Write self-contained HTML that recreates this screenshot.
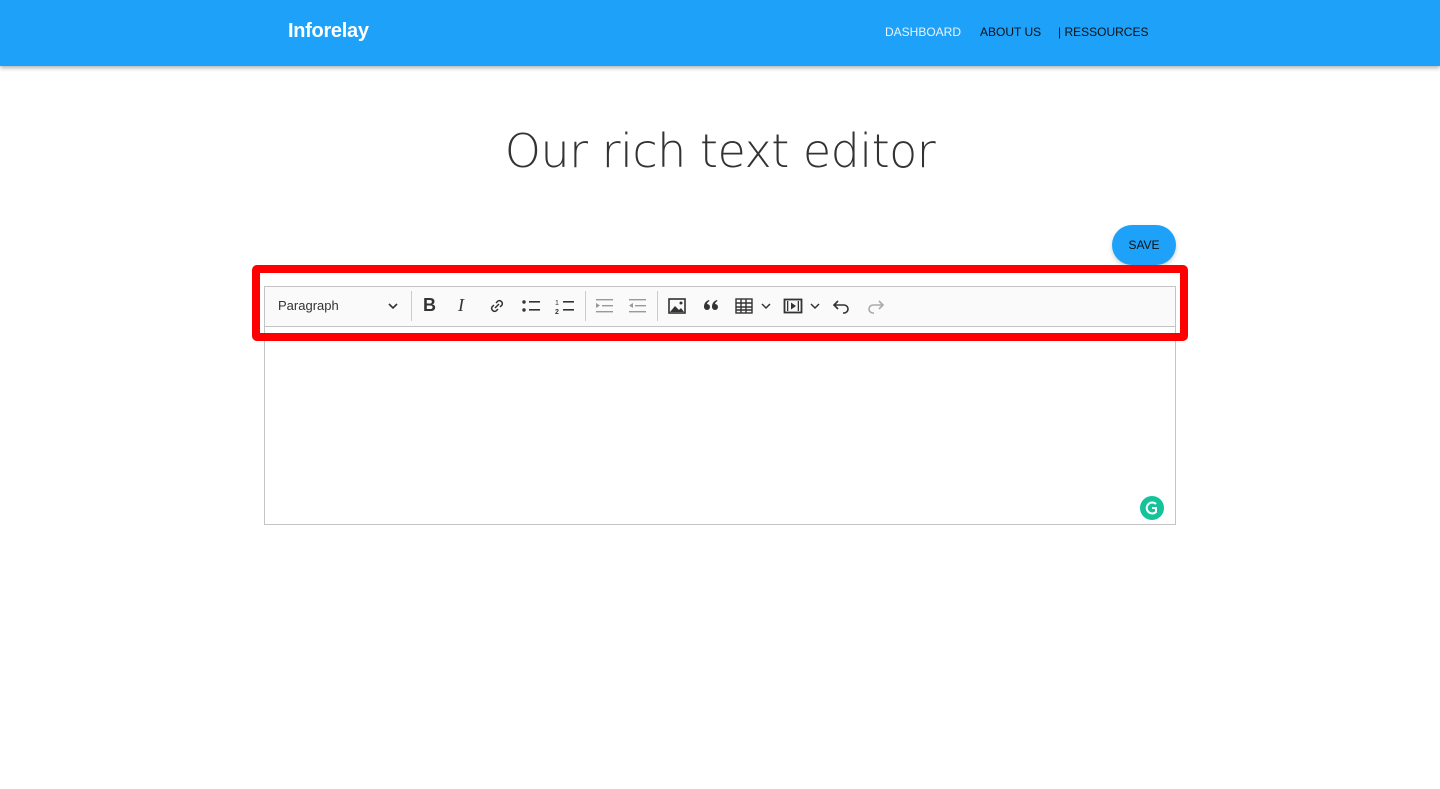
<!DOCTYPE html>
<html><head><style>
body{margin:0;width:1440px;height:789px;background:#fff;font-family:"Liberation Sans",sans-serif;position:relative;overflow:hidden}
.hdr{position:absolute;left:0;top:0;width:1440px;height:66px;background:#1da1f9;box-shadow:0 2px 4px rgba(0,0,0,.3)}
.logo{position:absolute;left:288px;top:20px;color:#fff;font-size:20px;font-weight:bold;letter-spacing:-.3px}
.nav{position:absolute;top:25px;font-size:12px}
h1{position:absolute;top:124px;left:0;width:1440px;text-align:center;margin:0;font-size:46px;color:#333;font-family:"DejaVu Sans","Liberation Sans",sans-serif;font-weight:200;letter-spacing:-.5px}
.save{position:absolute;left:1112px;top:225px;width:64px;height:40px;border-radius:20px;background:#1da1f9;color:#111;font-size:12px;text-align:center;line-height:40px;box-shadow:0 2px 4px rgba(0,0,0,.2)}
.ed{position:absolute;left:264px;top:286px;width:910px;height:237px;border:1px solid #c4c4c4}
.tb{position:absolute;left:264px;top:286px;width:910px;height:39px;border:1px solid #c4c4c4;background:#fafafa}
.red{position:absolute;left:252px;top:265px;width:920px;height:60px;border:8px solid #f00;border-radius:5px}
.ic{position:absolute;top:296px}
.sep{position:absolute;top:291px;width:1px;height:30px;background:#ccc}
</style></head><body>
<div class="hdr">
<div class="logo">Inforelay</div>
<div class="nav" style="left:885px;color:#eaf4ff">DASHBOARD</div>
<div class="nav" style="left:980px;color:#111">ABOUT US</div>
<div class="nav" style="left:1058px;color:#111">| RESSOURCES</div>
</div>
<h1>Our rich text editor</h1>
<div class="save">SAVE</div>
<div class="ed"></div>
<div class="tb"></div>
<div style="position:absolute;left:278px;top:298px;font-size:13px;color:#333">Paragraph</div>
<svg class="ic" style="left:386px" width="14" height="20"><path d="M3 8l4 4 4-4" stroke="#333" stroke-width="1.6" fill="none"/></svg>
<div class="sep" style="left:411px"></div>
<div style="position:absolute;left:423px;top:295px;font-size:18px;font-weight:bold;color:#333">B</div>
<div style="position:absolute;left:458px;top:295px;font-size:18px;font-style:italic;font-family:'Liberation Serif',serif;color:#333">I</div>
<svg class="ic" style="left:487px" width="20" height="20"><g stroke="#333" stroke-width="1.5" fill="none"><path d="M9 7l2-2a3 3 0 014 4l-2 2M11 13l-2 2a3 3 0 01-4-4l2-2M8 12l4-4"/></g></svg>
<svg class="ic" style="left:520px" width="22" height="20"><g fill="#333"><circle cx="4" cy="6" r="1.7"/><circle cx="4" cy="14" r="1.7"/><rect x="9" y="5" width="11" height="1.6"/><rect x="9" y="13" width="11" height="1.6"/></g></svg>
<svg class="ic" style="left:554px" width="22" height="20"><g fill="#333"><text x="1" y="9" font-size="7">1</text><text x="1" y="18" font-size="7" font-weight="bold">2</text><rect x="9" y="5" width="11" height="1.6"/><rect x="9" y="13" width="11" height="1.6"/></g></svg>
<div class="sep" style="left:585px"></div>
<svg class="ic" style="left:594px" width="22" height="20"><g fill="#999"><rect x="2" y="3" width="17" height="1.4"/><rect x="8" y="9" width="11" height="1.4"/><rect x="2" y="15" width="17" height="1.4"/><path d="M2 7l4 2.5-4 2.5z"/></g></svg>
<svg class="ic" style="left:627px" width="22" height="20"><g fill="#999"><rect x="2" y="3" width="17" height="1.4"/><rect x="8" y="9" width="11" height="1.4"/><rect x="2" y="15" width="17" height="1.4"/><path d="M6 7l-4 2.5 4 2.5z"/></g></svg>
<div class="sep" style="left:657px"></div>
<svg class="ic" style="left:667px" width="20" height="20"><rect x="2" y="3" width="16" height="14" fill="none" stroke="#333" stroke-width="1.6"/><path d="M3 16l5-6 4 4 2-2 3 4z" fill="#333"/><circle cx="14" cy="7" r="1.5" fill="#333"/></svg>
<svg class="ic" style="left:702px" width="20" height="20"><g fill="#333"><circle cx="5" cy="11" r="3"/><circle cx="13" cy="11" r="3"/><path d="M2 11c0-4 2-6 5-7l.5 1C5.5 6 4.5 8 5 10zM10 11c0-4 2-6 5-7l.5 1c-2 1-3 3-2.5 5z"/></g></svg>
<svg class="ic" style="left:734px" width="20" height="20"><g fill="none" stroke="#333" stroke-width="1.4"><rect x="2" y="3" width="16" height="14"/><path d="M2 7h16M2 11h16M2 14h16M7 3v14M12 3v14"/></g></svg>
<svg class="ic" style="left:759px" width="14" height="20"><path d="M3 8l4 4 4-4" stroke="#333" stroke-width="1.5" fill="none"/></svg>
<svg class="ic" style="left:783px" width="20" height="20"><rect x="1.5" y="3.5" width="17" height="13" fill="none" stroke="#333" stroke-width="1.8"/><rect x="4" y="5" width="1.3" height="10" fill="#333"/><rect x="14.7" y="5" width="1.3" height="10" fill="#333"/><path d="M8 6.5l5 3.5-5 3.5z" fill="#333"/></svg>
<svg class="ic" style="left:808px" width="14" height="20"><path d="M3 8l4 4 4-4" stroke="#333" stroke-width="1.5" fill="none"/></svg>
<svg class="ic" style="left:832px" width="20" height="20"><path d="M6 5L2 9l4 4M2 9h10a4 4 0 010 8h-1" stroke="#333" stroke-width="1.6" fill="none"/></svg>
<svg class="ic" style="left:865px" width="20" height="20"><path d="M14 5l4 4-4 4M18 9H8a4 4 0 000 8h1" stroke="#aaa" stroke-width="1.6" fill="none"/></svg>
<div class="red"></div>
<svg style="position:absolute;left:1140px;top:496px" width="24" height="24"><circle cx="12" cy="12" r="12" fill="#15c39a"/><path d="M16 8a5.5 5.5 0 100 8V12h-4" stroke="#fff" stroke-width="2" fill="none"/></svg>
</body></html>
